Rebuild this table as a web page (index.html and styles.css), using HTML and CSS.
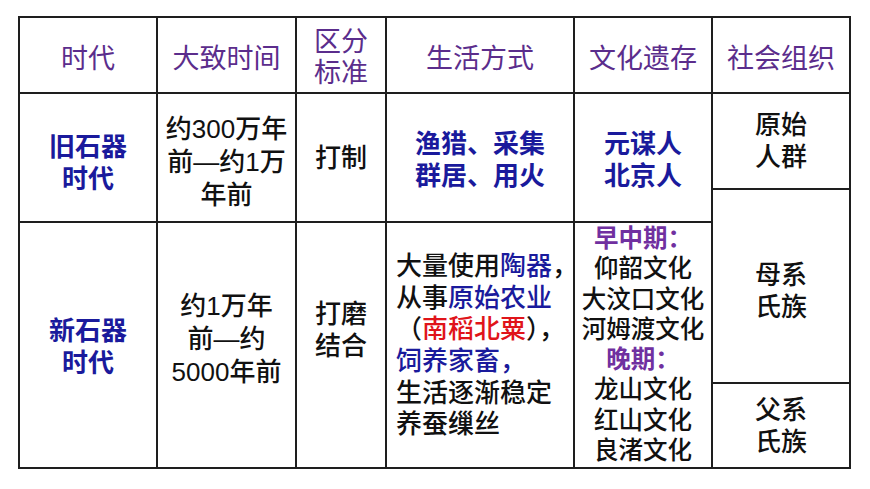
FILE: index.html
```html
<!DOCTYPE html>
<html lang="zh-CN">
<head>
<meta charset="utf-8">
<title>石器时代</title>
<link rel="stylesheet" href="styles.css">
</head>
<body>
<div class="table">
  <div class="cell head c1">时代</div>
  <div class="cell head c2">大致时间</div>
  <div class="cell head c3 two">区分<br>标准</div>
  <div class="cell head c4">生活方式</div>
  <div class="cell head c5">文化遗存</div>
  <div class="cell head c6">社会组织</div>

  <div class="cell r1 c1 blue bold era1">旧石器<br>时代</div>
  <div class="cell r1 c2 black time1"><span>约300万年</span><span>前<span class="dash">—</span>约1万</span><span>年前</span></div>
  <div class="cell r1 c3 black">打制</div>
  <div class="cell r1 c4 blue bold">渔猎、采集<br>群居、用火</div>
  <div class="cell r1 c5 blue bold">元谋人<br>北京人</div>
  <div class="cell org1 c6 black">原始<br>人群</div>

  <div class="cell r2 c1 blue bold">新石器<br>时代</div>
  <div class="cell r2 c2 black time2"><span>约1万年</span><span>前<span class="dash">—</span>约</span><span>5000年前</span></div>
  <div class="cell r2 c3 black mo">打磨<br>结合</div>
  <div class="cell r2 c4 black life">
    <div class="line">大量使用<span class="blue">陶器</span>，</div>
    <div class="line">从事<span class="blue">原始农业</span></div>
    <div class="line">（<span class="red">南稻北粟</span>），</div>
    <div class="line blue">饲养家畜，</div>
    <div class="line">生活逐渐稳定</div>
    <div class="line">养蚕缫丝</div>
  </div>
  <div class="cell r2 c5 black culture">
    <div class="line period">早中期：</div>
    <div class="line">仰韶文化</div>
    <div class="line">大汶口文化</div>
    <div class="line">河姆渡文化</div>
    <div class="line period">晚期：</div>
    <div class="line">龙山文化</div>
    <div class="line">红山文化</div>
    <div class="line">良渚文化</div>
  </div>
  <div class="cell org2 c6 black">母系<br>氏族</div>
  <div class="cell org3 c6 black">父系<br>氏族</div>
</div>
</body>
</html>
```

FILE: styles.css
```css
html, body {
  margin: 0;
  padding: 0;
  background: #ffffff;
}

body {
  width: 870px;
  height: 489px;
  overflow: hidden;
  font-family: "Noto Sans CJK SC", "Noto Sans", sans-serif;
}

.table {
  margin: 16px 0 0 18px;
  display: grid;
  grid-template-columns: 136px 137px 88px 186px 136px 136px;
  grid-template-rows: 74px 94px 31px 159px 83px;
  gap: 2px;
  padding: 2px;
  background: #1e1e1e;
  width: max-content;
}

.cell {
  background: #ffffff;
  display: flex;
  flex-direction: column;
  justify-content: center;
  align-items: center;
  text-align: center;
  font-size: 26px;
  line-height: 32px;
  white-space: nowrap;
}

.head {
  grid-row: 1;
  color: #5b2d8c;
  font-size: 27px;
  font-weight: 400;
  padding-top: 4px;
}

.head.two {
  line-height: 31px;
  padding-top: 0;
}

.c1 { grid-column: 1; }
.c2 { grid-column: 2; }
.c3 { grid-column: 3; }
.c4 { grid-column: 4; }
.c5 { grid-column: 5; }
.c6 { grid-column: 6; }

.r1 { grid-row: 2 / span 2; }
.r2 { grid-row: 4 / span 2; }
.org1 { grid-row: 2; }
.org2 { grid-row: 3 / span 2; padding-top: 9px; }
.org3 { grid-row: 5; }

.blue { color: #1a1a9c; }
.red { color: #e0141a; }
.black {
  color: #111111;
  font-weight: 500;
  font-family: "Liberation Sans", "Noto Sans CJK SC", sans-serif;
}
.bold { font-weight: 700; }

.dash {
  font-weight: 400;
}

.era1 { padding-top: 6px; }
.time1 { line-height: 33px; padding-top: 10px; }
.time2 { line-height: 33px; padding-bottom: 12px; }
.mo { padding-bottom: 30px; }

.life {
  align-items: flex-start;
  text-align: left;
  padding-left: 9px;
  line-height: 31.6px;
  padding-top: 2px;
}

.culture {
  justify-content: flex-start;
  font-size: 24.5px;
  line-height: 30.3px;
  padding-top: 1px;
}

.period {
  color: #7030a0;
  font-weight: 700;
}
```
